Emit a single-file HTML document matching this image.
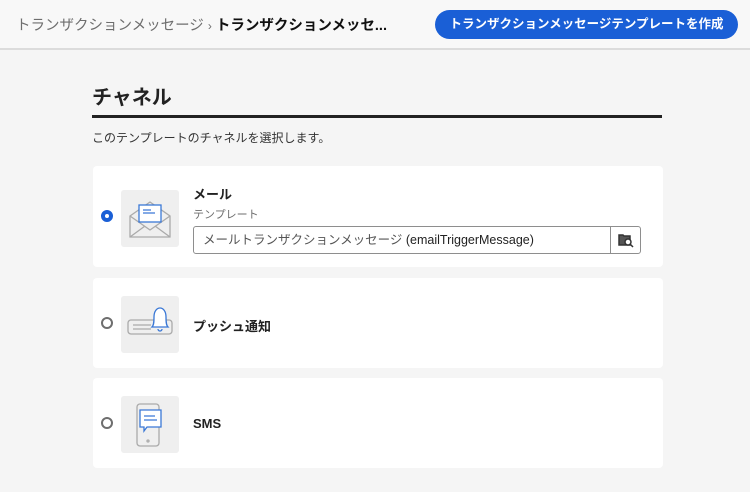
<!DOCTYPE html>
<html><head><meta charset="utf-8"><style>
*{box-sizing:border-box;margin:0;padding:0}
body{width:750px;height:492px;overflow:hidden;background:#f5f5f5;font-family:"Liberation Sans","Noto Sans CJK JP",sans-serif;color:#2c2c2c;position:relative}
.hdr{position:absolute;left:0;top:0;width:750px;height:50px;background:#f8f8f8;border-bottom:2px solid #dcdcdc}
.bc{position:absolute;left:16px;top:14px;font-size:14.5px;color:#6e6e6e;white-space:nowrap}
.bc b{color:#111;font-weight:bold}
.btn{position:absolute;left:435px;top:10px;width:303px;height:29px;border-radius:15px;background:#1a5fd6;color:#fff;font-size:12.5px;font-weight:bold;text-align:center;line-height:29px}
h1{position:absolute;left:92px;top:81px;font-size:20px;font-weight:bold;color:#222}
.rule{position:absolute;left:92px;top:115px;width:570px;height:3px;background:#222}
.desc{position:absolute;left:92px;top:129px;font-size:12px;color:#333}
.card{position:absolute;left:93px;width:570px;background:#fff;border-radius:4px}
.radio{position:absolute;left:101px;width:12px;height:12px;border-radius:50%;border:2px solid #6e6e6e;background:#fff}
.radio.on{border:4px solid #1a5fd6}
.ib{position:absolute;left:121px;width:58px;height:57px;background:#efefef;border-radius:3px}
.t{position:absolute;left:193px;font-size:13px;font-weight:bold;color:#222}
.sub{position:absolute;left:193px;top:206px;font-size:11px;color:#6e6e6e}
.inp{position:absolute;left:193px;top:226px;width:448px;height:28px;border:1px solid #8e8e8e;border-radius:3px;background:#fff;font-size:12.5px;color:#555;line-height:26px;padding-left:9px}
.inp span{color:#222}
.sb{position:absolute;right:0;top:0;width:30px;height:26px;border-left:1px solid #8e8e8e}
</style></head><body>
<div class="hdr">
<div class="bc">トランザクションメッセージ <span style="font-size:12px">›</span> <b>トランザクションメッセ...</b></div>
<div class="btn">トランザクションメッセージテンプレートを作成</div>
</div>
<h1>チャネル</h1>
<div class="rule"></div>
<div class="desc">このテンプレートのチャネルを選択します。</div>

<div class="card" style="top:166px;height:101px"></div>
<div class="card" style="top:278px;height:90px"></div>
<div class="card" style="top:378px;height:90px"></div>

<div class="radio on" style="top:210px"></div>
<div class="radio" style="top:317px"></div>
<div class="radio" style="top:417px"></div>

<div class="ib" style="top:190px"><svg width="58" height="57" viewBox="0 0 58 57" fill="none" stroke-width="1.3">
<path d="M9 26 L29 12 L49 26 V47 H9 Z" stroke="#aaa"/>
<path d="M9 26 L29 40 L49 26 M9 47 L24 36 M49 47 L34 36" stroke="#aaa"/>
<rect x="18" y="15" width="22" height="17" fill="#fff" stroke="#3a78d6"/>
<path d="M22 20 H30 M22 23 H34" stroke="#3a78d6"/></svg></div>
<div class="ib" style="top:296px"><svg width="58" height="57" viewBox="0 0 58 57" fill="none" stroke-width="1.3" stroke="#aaa">
<rect x="7" y="24" width="44" height="14" rx="3"/>
<path d="M12 29 H30 M12 33 H30"/>
<path d="M31 31 C33 29 33 25 33 21 C33 15 36 12 39 12 C42 12 45 15 45 21 C45 25 45 29 47 31 Z" fill="#fff" stroke="#3a78d6"/>
<path d="M37 33 a2 2 0 0 0 4 0" stroke="#3a78d6"/></svg></div>
<div class="ib" style="top:396px"><svg width="58" height="57" viewBox="0 0 58 57" fill="none" stroke-width="1.3" stroke="#aaa">
<rect x="16" y="8" width="22" height="42" rx="3"/>
<circle cx="27" cy="45" r="1"/>
<path d="M19 14 H40 V31 H26 L23 35 V31 H19 Z" fill="#fff" stroke="#3a78d6"/>
<path d="M23 20 H34 M23 24 H36" stroke="#3a78d6"/></svg></div>

<div class="t" style="top:184px">メール</div>
<div class="sub">テンプレート</div>
<div class="inp">メールトランザクションメッセージ <span>(emailTriggerMessage)</span><div class="sb"><svg width="30" height="26" viewBox="0 0 30 26" fill="none" stroke="#333" stroke-width="1.5"><path d="M8 8 H12 L13 9 H19 V18 H8 Z" fill="#555"/><circle cx="17" cy="15" r="3" fill="#fff"/><path d="M19 17 L22 20"/></svg></div></div>
<div class="t" style="top:316px">プッシュ通知</div>
<div class="t" style="top:416px">SMS</div>
</body></html>
